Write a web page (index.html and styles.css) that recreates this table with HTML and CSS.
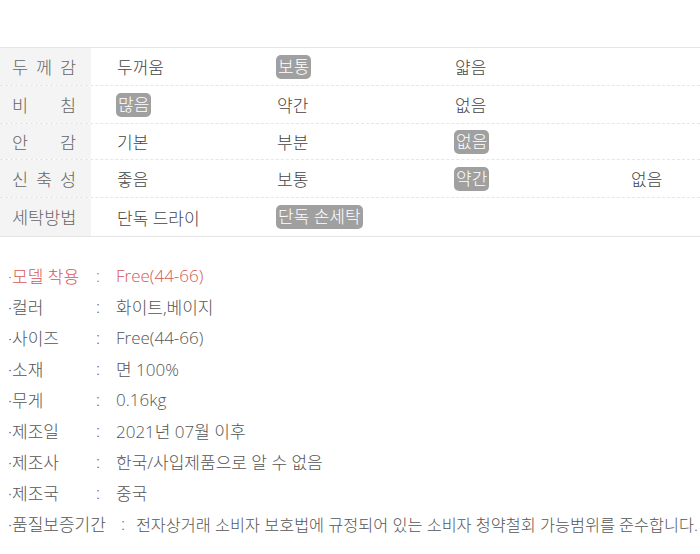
FILE: index.html
```html
<!DOCTYPE html>
<html lang="ko">
<head>
<meta charset="utf-8">
<link rel="stylesheet" href="styles.css">
</head>
<body>
<div class="page">
  <div class="spec">
    <div class="row">
      <div class="lab"><span>두 께 감</span></div>
      <div class="cell">두꺼움</div>
      <div class="cell"><span class="on">보통</span></div>
      <div class="cell">얇음</div>
      <div class="cell"></div>
    </div>
    <div class="row">
      <div class="lab"><span>비 침</span></div>
      <div class="cell"><span class="on">많음</span></div>
      <div class="cell">약간</div>
      <div class="cell">없음</div>
      <div class="cell"></div>
    </div>
    <div class="row short">
      <div class="lab"><span>안 감</span></div>
      <div class="cell">기본</div>
      <div class="cell">부분</div>
      <div class="cell"><span class="on">없음</span></div>
      <div class="cell"></div>
    </div>
    <div class="row">
      <div class="lab"><span>신 축 성</span></div>
      <div class="cell">좋음</div>
      <div class="cell">보통</div>
      <div class="cell"><span class="on">약간</span></div>
      <div class="cell">없음</div>
    </div>
    <div class="row last">
      <div class="lab"><span>세탁방법</span></div>
      <div class="cell">단독 드라이</div>
      <div class="cell wide"><span class="on">단독 손세탁</span></div>
      <div class="cell"></div>
    </div>
  </div>

  <ul class="info">
    <li class="item red"><span class="k">·모델 착용</span><span class="c">:</span><span class="v">Free(44-66)</span></li>
    <li class="item"><span class="k">·컬러</span><span class="c">:</span><span class="v">화이트,베이지</span></li>
    <li class="item"><span class="k">·사이즈</span><span class="c">:</span><span class="v">Free(44-66)</span></li>
    <li class="item"><span class="k">·소재</span><span class="c">:</span><span class="v">면 100%</span></li>
    <li class="item"><span class="k">·무게</span><span class="c">:</span><span class="v">0.16kg</span></li>
    <li class="item"><span class="k">·제조일</span><span class="c">:</span><span class="v">2021년 07월 이후</span></li>
    <li class="item"><span class="k">·제조사</span><span class="c">:</span><span class="v">한국/사입제품으로 알 수 없음</span></li>
    <li class="item"><span class="k">·제조국</span><span class="c">:</span><span class="v">중국</span></li>
    <li class="item long"><span class="k">·품질보증기간</span><span class="c">:</span><span class="v">전자상거래 소비자 보호법에 규정되어 있는 소비자 청약철회 가능범위를 준수합니다.</span></li>
  </ul>
</div>
</body>
</html>
```

FILE: styles.css
```css
* { box-sizing: border-box; }
html, body { margin: 0; padding: 0; background: #fff; }
body {
  font-family: "Open Sans", "Noto Sans CJK KR", sans-serif;
  font-weight: 300;
  color: #555;
  width: 700px;
  height: 554px;
  overflow: hidden;
}
.page { padding-top: 47px; }

.spec {
  border-top: 1px solid #e6e6e6;
  border-bottom: 1px solid #e6e6e6;
}
.row {
  display: grid;
  grid-template-columns: 91px 160px 178px 176px 1fr;
  height: 38px;
  border-bottom: 1px dashed #e6e6e6;
}
.row.short { height: 36px; }
.row.last { border-bottom: 0; height: 38px; }
.row.last .wide { grid-column: span 2; }
.lab {
  background: #f4f4f4;
  display: flex;
  align-items: center;
  padding-left: 12px;
  font-size: 17.5px;
  color: #666;
}
.lab span {
  display: block;
  width: 64px;
  text-align: justify;
  text-align-last: justify;
  line-height: 20px;
  white-space: nowrap;
}
.cell {
  display: flex;
  align-items: center;
  padding-left: 26px;
  font-size: 17px;
  color: #444;
}
.on {
  display: inline-block;
  background: #a0a0a0;
  color: #fff;
  border-radius: 5px;
  padding: 0 2px;
  margin-left: -1px;
  line-height: 24px;
}

.info {
  list-style: none;
  margin: 23px 0 0;
  padding: 0 0 0 8px;
}
.item {
  display: flex;
  align-items: center;
  height: 31px;
  font-size: 17px;
  color: #555;
  white-space: nowrap;
}
.item .k { min-width: 88px; flex-shrink: 0; }
.item .c { width: 20px; flex-shrink: 0; }
.item.long .k { min-width: 0; padding-right: 15px; }
.item.long .c { width: 15px; }
.item.long .v { font-size: 16.3px; }
.item.red { color: #d95656; }
```
